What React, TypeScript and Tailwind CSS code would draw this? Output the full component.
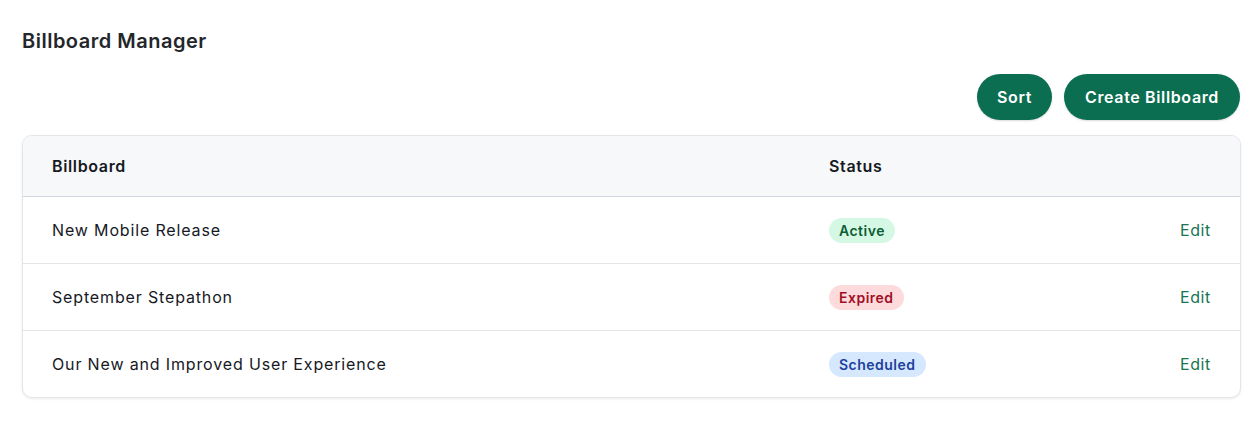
import React from "react";

const rows = [
  { name: "New Mobile Release", status: "Active", cls: "bg-[#d5f8e4] text-[#0b5e33]" },
  { name: "September Stepathon", status: "Expired", cls: "bg-[#fddbdd] text-[#a10f24]" },
  { name: "Our New and Improved User Experience", status: "Scheduled", cls: "bg-[#d6e8fd] text-[#1d3f9e]" },
];

export default function App() {
  return (
    <div className="min-h-[427px] bg-white pl-[22px] pr-[15px] pt-[27px] text-[#111827]" style={{ fontFamily: "Inter, 'Noto Sans', sans-serif" }}>
      <h1 className="text-[20px] leading-[28px] tracking-[0.025em] font-semibold text-[#23262b]">Billboard Manager</h1>
      <div className="mt-[19px] flex justify-end gap-[12px] pr-[1px]">
        <button className="h-[46px] rounded-full bg-[#0b6e50] px-[20px] text-[16px] tracking-[0.04em] font-semibold text-white shadow-[0_1px_2px_rgba(0,0,0,0.15)]">Sort</button>
        <button className="h-[46px] rounded-full bg-[#0b6e50] px-[21px] text-[16px] tracking-[0.04em] font-semibold text-white shadow-[0_1px_2px_rgba(0,0,0,0.15)]">Create Billboard</button>
      </div>
      <div className="mt-[15px] overflow-hidden rounded-[10px] border border-[#e3e5e9] bg-white shadow-[0_1px_3px_rgba(0,0,0,0.08)]">
        <div className="grid h-[61px] grid-cols-[777px_1fr_auto] items-center border-b border-[#d3d7dd] bg-[#f7f8fa] px-[29px] text-[16px] tracking-[0.04em] font-semibold text-[#16191f]">
          <div>Billboard</div>
          <div>Status</div>
          <div></div>
        </div>
        {rows.map((r, i) => (
          <div
            key={r.name}
            className={`grid grid-cols-[777px_1fr_auto] items-center px-[29px] text-[16px] tracking-[0.053em] ${i < rows.length - 1 ? "h-[67px] border-b border-[#e4e5e9]" : "h-[66px]"}`}
          >
            <div className="text-[#16191f]">{r.name}</div>
            <div>
              <span className={`inline-flex h-[25px] items-center rounded-full px-[10px] text-[14px] tracking-[0.035em] font-semibold ${r.cls}`}>{r.status}</span>
            </div>
            <div className="text-[#177553] tracking-[0.04em]">Edit</div>
          </div>
        ))}
      </div>
    </div>
  );
}
